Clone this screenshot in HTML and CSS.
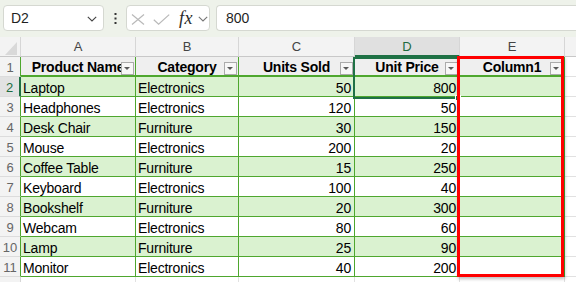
FILE: index.html
```html
<!DOCTYPE html>
<html>
<head>
<meta charset="utf-8">
<link rel="stylesheet" href="styles.css">
</head>
<body>
<div class="toolbar">
  <div class="namebox">
    <span>D2</span>
    <svg width="10" height="6" viewBox="0 0 10 6"><path d="M0.8 0.8 L5 5 L9.2 0.8" fill="none" stroke="#444" stroke-width="1.1"/></svg>
  </div>
  <div class="kebab">
    <svg width="3" height="11" viewBox="0 0 3 11"><rect x="0.5" y="0" width="2" height="2" fill="#333"/><rect x="0.5" y="4.5" width="2" height="2" fill="#333"/><rect x="0.5" y="9" width="2" height="2" fill="#333"/></svg>
  </div>
  <div class="fxbox">
    <svg class="ic-x" width="14" height="11" viewBox="0 0 14 11"><path d="M1 0.5 L13 10.5 M13 0.5 L1 10.5" fill="none" stroke="#b9b9b9" stroke-width="1.2"/></svg>
    <svg class="ic-ok" width="17" height="11" viewBox="0 0 17 11"><path d="M0.8 5.8 L5.6 10.2 L16.2 0.6" fill="none" stroke="#b9b9b9" stroke-width="1.2"/></svg>
    <span class="fx">fx</span>
    <svg class="ic-dd" width="10" height="6" viewBox="0 0 10 6"><path d="M0.8 0.8 L5 5 L9.2 0.8" fill="none" stroke="#777" stroke-width="1.1"/></svg>
  </div>
  <div class="formula">800</div>
</div>

<div class="sheet">
  <div class="grid">
    <div class="corner"><span class="tri"></span></div>
    <div class="ch">A</div>
    <div class="ch">B</div>
    <div class="ch">C</div>
    <div class="ch sel">D</div>
    <div class="ch">E</div>
    <div class="ch last"></div>

    <div class="rh">1</div>
    <div class="c th"><span>Product Name</span><span class="fb"></span></div>
    <div class="c th"><span>Category</span><span class="fb"></span></div>
    <div class="c th"><span>Units Sold</span><span class="fb"></span></div>
    <div class="c th"><span>Unit Price</span><span class="fb"></span></div>
    <div class="c th"><span>Column1</span><span class="fb"></span></div>
    <div class="f"></div>

    <div class="rh sel">2</div>
    <div class="c band">Laptop</div><div class="c band">Electronics</div><div class="c band num">50</div><div class="c band num">800</div><div class="c band"></div><div class="f"></div>

    <div class="rh">3</div>
    <div class="c">Headphones</div><div class="c">Electronics</div><div class="c num">120</div><div class="c num">50</div><div class="c"></div><div class="f"></div>

    <div class="rh">4</div>
    <div class="c band">Desk Chair</div><div class="c band">Furniture</div><div class="c band num">30</div><div class="c band num">150</div><div class="c band"></div><div class="f"></div>

    <div class="rh">5</div>
    <div class="c">Mouse</div><div class="c">Electronics</div><div class="c num">200</div><div class="c num">20</div><div class="c"></div><div class="f"></div>

    <div class="rh">6</div>
    <div class="c band">Coffee Table</div><div class="c band">Furniture</div><div class="c band num">15</div><div class="c band num">250</div><div class="c band"></div><div class="f"></div>

    <div class="rh">7</div>
    <div class="c">Keyboard</div><div class="c">Electronics</div><div class="c num">100</div><div class="c num">40</div><div class="c"></div><div class="f"></div>

    <div class="rh">8</div>
    <div class="c band">Bookshelf</div><div class="c band">Furniture</div><div class="c band num">20</div><div class="c band num">300</div><div class="c band"></div><div class="f"></div>

    <div class="rh">9</div>
    <div class="c">Webcam</div><div class="c">Electronics</div><div class="c num">80</div><div class="c num">60</div><div class="c"></div><div class="f"></div>

    <div class="rh">10</div>
    <div class="c band">Lamp</div><div class="c band">Furniture</div><div class="c band num">25</div><div class="c band num">90</div><div class="c band"></div><div class="f"></div>

    <div class="rh">11</div>
    <div class="c">Monitor</div><div class="c">Electronics</div><div class="c num">40</div><div class="c num">200</div><div class="c"></div><div class="f"></div>

    <div class="rh plain"></div>
    <div class="e"></div><div class="e"></div><div class="e"></div><div class="e"></div><div class="e"></div><div class="f"></div>
  </div>
  <div class="selbox"></div>
  <div class="handle"></div>
  <div class="redbox"></div>
</div>
</body>
</html>
```

FILE: styles.css
```css
* { box-sizing: border-box; }

html, body {
  margin: 0;
  padding: 0;
}

body {
  width: 576px;
  height: 282px;
  overflow: hidden;
  background: #ffffff;
  font-family: "Liberation Sans", Arial, sans-serif;
  color: #000;
}

/* ---------- formula bar ---------- */
.toolbar {
  height: 37px;
  background: #eef2ea;
  display: flex;
  align-items: flex-start;
  padding: 5px 0 0 3px;
}

.namebox {
  width: 101px;
  height: 26px;
  background: #fff;
  border: 1px solid #d5d8d1;
  border-radius: 4px;
  display: flex;
  align-items: center;
  justify-content: space-between;
  padding: 0 6px 0 7px;
  font-size: 14px;
  color: #1f1f1f;
}

.namebox svg { margin-top: 1px; }

.kebab {
  width: 22px;
  height: 26px;
  display: flex;
  align-items: center;
  justify-content: center;
}

.fxbox {
  width: 84px;
  height: 26px;
  background: #fff;
  border: 1px solid #d5d8d1;
  border-radius: 4px;
  display: flex;
  align-items: center;
  padding-left: 4px;
}

.ic-x { margin-top: 2px; }
.ic-ok { margin-left: 8px; margin-top: 2px; }

.fx {
  margin-left: 9px;
  width: 17px;
  font-family: "Liberation Serif", "Times New Roman", serif;
  font-style: italic;
  font-size: 18px;
  line-height: 20px;
  color: #2b2b2b;
  letter-spacing: 0.5px;
}

.ic-dd { margin-left: 2px; margin-top: 1px; }

.formula {
  flex: 1;
  margin-left: 6px;
  height: 26px;
  background: #fff;
  border: 1px solid #d5d8d1;
  border-right: none;
  border-radius: 4px 0 0 4px;
  padding-left: 9px;
  font-size: 14px;
  line-height: 24px;
  color: #1f1f1f;
}

/* ---------- sheet ---------- */
.sheet {
  position: relative;
}

.grid {
  display: grid;
  grid-template-columns: 21px 115px 103px 116px 105px 105px 11px;
  grid-auto-rows: 20px;
}

.corner {
  background: #f3f3f3;
  border-right: 1px solid #d6d6d6;
  border-bottom: 1px solid #c8c8c8;
  position: relative;
}

.corner .tri {
  position: absolute;
  left: 5px;
  top: 5px;
  width: 12px;
  height: 13px;
  background: #d9d9d9;
  clip-path: polygon(100% 0, 100% 100%, 0 100%);
}

.ch {
  background: #f3f3f3;
  border-right: 1px solid #d6d6d6;
  border-bottom: 1px solid #c8c8c8;
  text-align: center;
  font-size: 13px;
  line-height: 19px;
  color: #444;
}

.ch.sel {
  background: #e0e0e0;
  color: #1d6b3e;
  border-bottom: 2px solid #1f7145;
}

.ch.last { border-right: none; }

.rh {
  background: #f3f3f3;
  border-right: 1px solid #4ea72e;
  border-bottom: 1px solid #dcdcdc;
  text-align: center;
  font-size: 13px;
  line-height: 19px;
  padding-top: 1px;
  color: #666;
}

.rh.sel {
  background: #e2e2e2;
  color: #1d6b3e;
  border-right: 2px solid #1f7145;
}

.rh.plain { border-right: 1px solid #d6d6d6; }

.c {
  border-right: 1px solid #4ea72e;
  border-bottom: 1px solid #4ea72e;
  padding: 2px 3px 0 2px;
  font-size: 14px;
  letter-spacing: -0.2px;
  line-height: 19px;
  white-space: nowrap;
  overflow: hidden;
}

.band { background: #daf2d0; }

.num { text-align: right; }

.th {
  position: relative;
  background: #efefef;
  font-weight: bold;
  text-align: center;
  padding: 1px 0 0 0;
  border-bottom: 2px solid #4ea72e;
  line-height: 19px;
}

.th span:first-child {
  display: block;
  width: 100%;
  text-align: center;
  white-space: nowrap;
}

.fb {
  position: absolute;
  right: 1px;
  top: 5px;
  width: 13px;
  height: 13px;
  background: #f7f7f7;
  border: 1px solid #ababab;
}

.fb::after {
  content: "";
  position: absolute;
  left: 2px;
  top: 4px;
  border-left: 3.5px solid transparent;
  border-right: 3.5px solid transparent;
  border-top: 3.5px solid #5a5a5a;
}

.f {
  border-bottom: 1px solid #e1e1e1;
}

.e {
  border-right: 1px solid #e1e1e1;
  border-bottom: 1px solid #e1e1e1;
}

/* ---------- overlays ---------- */
.selbox {
  position: absolute;
  left: 353px;
  top: 20px;
  width: 107px;
  height: 42px;
  border: 2px solid #1f7145;
  pointer-events: none;
}

.handle {
  position: absolute;
  left: 455px;
  top: 58px;
  width: 6px;
  height: 6px;
  background: #1f7145;
  border: 1px solid #fff;
}

.redbox {
  position: absolute;
  left: 457px;
  top: 19px;
  width: 107px;
  height: 221px;
  border: 3.5px solid #ff0000;
  box-shadow: 1px 2px 3px rgba(0, 0, 0, 0.25);
  pointer-events: none;
}
```
